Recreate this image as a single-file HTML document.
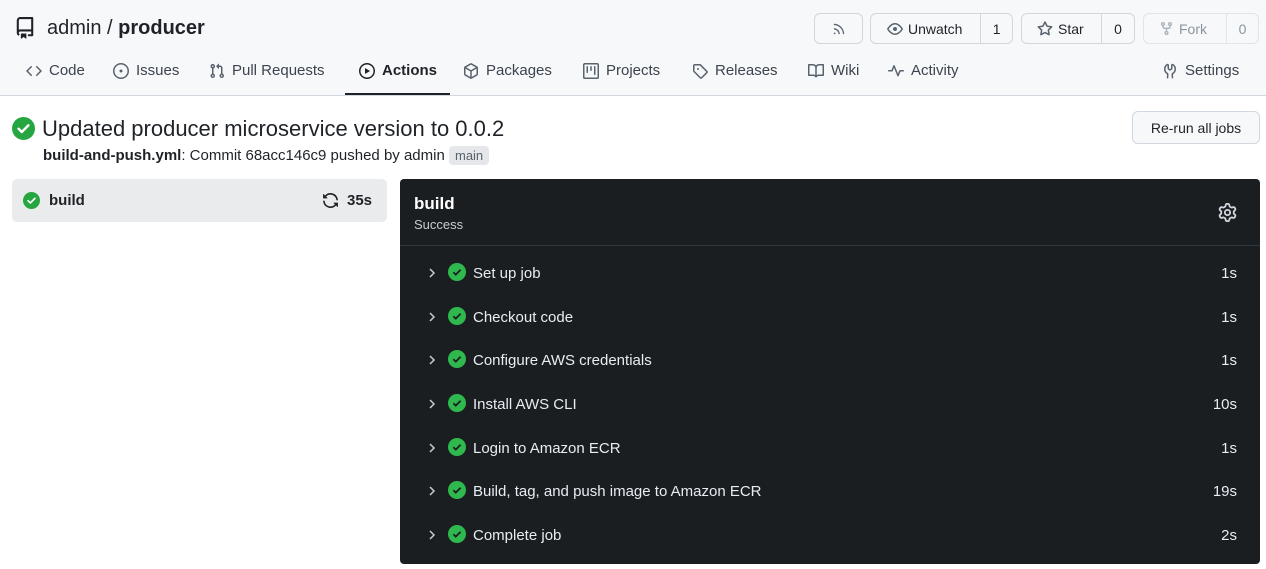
<!DOCTYPE html>
<html><head><meta charset="utf-8"><style>
*{box-sizing:border-box;margin:0;padding:0}
body{width:1266px;height:569px;background:#fff;font-family:"Liberation Sans",Helvetica,Arial,sans-serif;color:#1f2328;position:relative;overflow:hidden}
.a{position:absolute}
.hdr{left:0;top:0;width:1266px;height:96px;background:#f6f8fa;border-bottom:1px solid #d0d7de}
.nav{font-size:15px;color:#3d444d;top:62px;white-space:nowrap}
.nav svg{position:absolute;left:-23px;top:1px}
.btn{border:1px solid #d0d7de;border-radius:6px;background:#f6f8fa;height:31px;top:13px;font-size:14px;display:flex;align-items:center}
.btn .c{border-left:1px solid #d0d7de;height:100%;display:flex;align-items:center;justify-content:center}
.row{left:400px;width:860px;height:44px;color:#e6edf3;font-size:15px}
.row .ch{position:absolute;left:27px;top:14px}
.row .ic{position:absolute;left:48px;top:12px}
.row .t{position:absolute;left:73px;top:14px}
.row .d{position:absolute;right:23px;top:14px}
</style></head><body>
<div class="a hdr"></div>
<svg class="a" style="left:14px;top:15px" width="22" height="26" viewBox="0 0 16 16"><path fill="#1f2328" d="M2 2.5A2.5 2.5 0 0 1 4.5 0h8.75a.75.75 0 0 1 .75.75v12.5a.75.75 0 0 1-.75.75h-2.5a.75.75 0 0 1 0-1.5h1.75v-2h-8a1 1 0 0 0-.714 1.7.75.75 0 1 1-1.072 1.05A2.495 2.495 0 0 1 2 11.5Zm10.5-1h-8a1 1 0 0 0-1 1v6.708A2.486 2.486 0 0 1 4.5 9h8ZM5 12.25a.25.25 0 0 1 .25-.25h3.5a.25.25 0 0 1 .25.25v3.25a.25.25 0 0 1-.4.2l-1.45-1.087a.249.249 0 0 0-.3 0L5.4 15.7a.25.25 0 0 1-.4-.2Z"/></svg>
<div class="a" style="left:47px;top:17px;font-size:20px">admin <span style="font-weight:300">/</span> <b>producer</b></div>

<div class="a btn" style="left:814px;width:49px;justify-content:center"><svg width="14" height="14" viewBox="0 0 16 16"><path fill="#59636e" d="M2.002 2.725a.75.75 0 0 1 .797-.699C8.79 2.420 13.58 7.21 13.974 13.201a.75.75 0 0 1-1.497.098 10.502 10.502 0 0 0-9.776-9.776.747.747 0 0 1-.7-.798ZM2.840 7.05h-.002a7.002 7.002 0 0 1 6.113 6.111.75.75 0 0 1-1.490.178 5.503 5.503 0 0 0-4.800-4.800.75.75 0 0 1 .179-1.489ZM2 13a1 1 0 1 1 2 0 1 1 0 0 1-2 0Z"/></svg></div>
<div class="a btn" style="left:870px;width:143px"><span style="width:110px;padding-left:16px;display:flex;align-items:center;gap:5px"><svg width="16" height="16" viewBox="0 0 16 16"><path fill="#59636e" d="M8 2c1.981 0 3.671.992 4.933 2.078 1.270 1.091 2.187 2.345 2.637 3.023a1.620 1.620 0 0 1 0 1.798c-.450.678-1.367 1.932-2.637 3.023C11.670 13.008 9.981 14 8 14c-1.981 0-3.671-.992-4.933-2.078C1.797 10.830.880 9.576.430 8.898a1.620 1.620 0 0 1 0-1.798c.450-.677 1.367-1.931 2.637-3.022C4.330 2.992 6.019 2 8 2ZM1.679 7.932a.12.12 0 0 0 0 .136c.411.622 1.241 1.750 2.366 2.717C5.176 11.758 6.527 12.500 8 12.500c1.473 0 2.825-.742 3.955-1.715 1.124-.967 1.954-2.096 2.366-2.717a.12.12 0 0 0 0-.136c-.412-.621-1.242-1.750-2.366-2.717C10.824 4.242 9.473 3.500 8 3.500c-1.473 0-2.825.742-3.955 1.715-1.124.967-1.954 2.096-2.366 2.717ZM8 10a2 2 0 1 1-.001-3.999A2 2 0 0 1 8 10Z"/></svg>Unwatch</span><span class="c" style="width:32px">1</span></div>
<div class="a btn" style="left:1021px;width:114px"><span style="width:79px;padding-left:15px;display:flex;align-items:center;gap:5px"><svg width="16" height="16" viewBox="0 0 16 16"><path fill="#59636e" d="M8 .25a.75.75 0 0 1 .673.418l1.882 3.815 4.210.612a.75.75 0 0 1 .416 1.279l-3.046 2.970.719 4.192a.751.751 0 0 1-1.088.791L8 12.347l-3.766 1.980a.75.75 0 0 1-1.088-.790l.720-4.194L.818 6.374a.75.75 0 0 1 .416-1.280l4.210-.611L7.327.668A.75.75 0 0 1 8 .25Zm0 2.445L6.615 5.500a.75.75 0 0 1-.564.410l-3.097.450 2.240 2.184a.75.75 0 0 1 .216.664l-.528 3.084 2.769-1.456a.75.75 0 0 1 .698 0l2.770 1.456-.530-3.084a.75.75 0 0 1 .216-.664l2.240-2.183-3.096-.450a.75.75 0 0 1-.564-.410L8 2.694Z"/></svg>Star</span><span class="c" style="width:33px">0</span></div>
<div class="a btn" style="left:1143px;width:116px;color:#8c959f;border-color:#e1e4e8"><span style="width:82px;padding-left:15px;display:flex;align-items:center;gap:5px"><svg width="15" height="15" viewBox="0 0 16 16"><path fill="#aab2bb" d="M5 5.372v.878c0 .414.336.75.75.75h4.5a.75.75 0 0 0 .75-.75v-.878a2.25 2.25 0 1 1 1.5 0v.878a2.25 2.25 0 0 1-2.25 2.25h-1.5v2.128a2.251 2.251 0 1 1-1.5 0V8.5h-1.5A2.25 2.25 0 0 1 3.5 6.25v-.878a2.25 2.25 0 1 1 1.5 0ZM5 3.25a.75.75 0 1 0-1.5 0 .75.75 0 0 0 1.5 0Zm6.75.75a.75.75 0 1 0 0-1.5.75.75 0 0 0 0 1.5Zm-3 8.75a.75.75 0 1 0-1.5 0 .75.75 0 0 0 1.5 0Z"/></svg>Fork</span><span class="c" style="width:32px;border-color:#e1e4e8">0</span></div>

<div class="a nav" style="left:49px"><svg width="16" height="16" viewBox="0 0 16 16"><path fill="#59636e" d="m11.28 3.22 4.25 4.25a.75.75 0 0 1 0 1.06l-4.25 4.25a.749.749 0 0 1-1.275-.326.749.749 0 0 1 .215-.734L13.94 8l-3.72-3.72a.749.749 0 0 1 .326-1.275.749.749 0 0 1 .734.215Zm-6.56 0a.751.751 0 0 1 1.042.018.751.751 0 0 1 .018 1.042L2.06 8l3.72 3.72a.749.749 0 0 1-.326 1.275.749.749 0 0 1-.734-.215L.47 8.53a.75.75 0 0 1 0-1.06Z"/></svg>Code</div>
<div class="a nav" style="left:136px"><svg width="16" height="16" viewBox="0 0 16 16"><path fill="#59636e" d="M8 9.5a1.5 1.5 0 1 0 0-3 1.5 1.5 0 0 0 0 3Z"/><path fill="#59636e" d="M8 0a8 8 0 1 1 0 16A8 8 0 0 1 8 0ZM1.5 8a6.5 6.5 0 1 0 13 0 6.5 6.5 0 0 0-13 0Z"/></svg>Issues</div>
<div class="a nav" style="left:232px"><svg width="16" height="16" viewBox="0 0 16 16"><path fill="#59636e" d="M1.5 3.25a2.25 2.25 0 1 1 3 2.122v5.256a2.251 2.251 0 1 1-1.5 0V5.372A2.25 2.25 0 0 1 1.5 3.25Zm5.677-.177L9.573.677A.25.25 0 0 1 10 .854V2.5h1A2.5 2.5 0 0 1 13.5 5v5.628a2.251 2.251 0 1 1-1.5 0V5a1 1 0 0 0-1-1h-1v1.646a.25.25 0 0 1-.427.177L7.177 3.427a.25.25 0 0 1 0-.354ZM3.75 2.5a.75.75 0 1 0 0 1.5.75.75 0 0 0 0-1.5Zm0 9.5a.75.75 0 1 0 0 1.5.75.75 0 0 0 0-1.5Zm8.25.75a.75.75 0 1 0 1.5 0 .75.75 0 0 0-1.5 0Z"/></svg>Pull Requests</div>
<div class="a nav" style="left:382px;color:#1f2328;font-weight:bold"><svg width="16" height="16" viewBox="0 0 16 16"><path fill="#1f2328" d="M8 0a8 8 0 1 1 0 16A8 8 0 0 1 8 0ZM1.5 8a6.5 6.5 0 1 0 13 0 6.5 6.5 0 0 0-13 0Zm4.879-2.773 4.264 2.559a.25.25 0 0 1 0 .428l-4.264 2.559A.25.25 0 0 1 6 10.559V5.442a.25.25 0 0 1 .379-.215Z"/></svg>Actions</div>
<div class="a" style="left:345px;top:93px;width:105px;height:2px;background:#1f2328"></div>
<div class="a nav" style="left:486px"><svg width="16" height="16" viewBox="0 0 16 16"><path fill="#59636e" d="m8.878.392 5.25 3.045c.54.314.872.89.872 1.514v6.098a1.75 1.75 0 0 1-.872 1.514l-5.25 3.045a1.75 1.75 0 0 1-1.756 0l-5.25-3.045A1.75 1.75 0 0 1 1 11.049V4.951c0-.624.332-1.201.872-1.514L7.122.392a1.75 1.75 0 0 1 1.756 0ZM7.875 1.69l-4.63 2.685L8 7.133l4.755-2.758-4.63-2.685a.248.248 0 0 0-.25 0ZM2.5 5.677v5.372c0 .09.047.171.125.216l4.625 2.683V8.432Zm6.25 8.271 4.625-2.683a.25.25 0 0 0 .125-.216V5.677L8.75 8.432Z"/></svg>Packages</div>
<div class="a nav" style="left:606px"><svg width="16" height="16" viewBox="0 0 16 16"><path fill="#59636e" d="M1.75 0h12.5C15.216 0 16 .784 16 1.75v12.5A1.75 1.75 0 0 1 14.25 16H1.75A1.75 1.75 0 0 1 0 14.25V1.75C0 .784.784 0 1.75 0ZM1.5 1.75v12.5c0 .138.112.25.25.25h12.5a.25.25 0 0 0 .25-.25V1.75a.25.25 0 0 0-.25-.25H1.75a.25.25 0 0 0-.25.25ZM11.75 3a.75.75 0 0 1 .75.75v7.5a.75.75 0 0 1-1.5 0v-7.5a.75.75 0 0 1 .75-.75Zm-8.25.75a.75.75 0 0 1 1.5 0v5.5a.75.75 0 0 1-1.5 0ZM8 3a.75.75 0 0 1 .75.75v3.5a.75.75 0 0 1-1.5 0v-3.5A.75.75 0 0 1 8 3Z"/></svg>Projects</div>
<div class="a nav" style="left:715px"><svg width="16" height="16" viewBox="0 0 16 16"><path fill="#59636e" d="M1 7.775V2.75C1 1.784 1.784 1 2.75 1h5.025c.464 0 .91.184 1.238.513l6.25 6.25a1.75 1.75 0 0 1 0 2.474l-5.026 5.026a1.75 1.75 0 0 1-2.474 0l-6.25-6.25A1.752 1.752 0 0 1 1 7.775Zm1.5 0c0 .066.026.13.073.177l6.25 6.25a.25.25 0 0 0 .354 0l5.025-5.025a.25.25 0 0 0 0-.354l-6.25-6.25a.25.25 0 0 0-.177-.073H2.75a.25.25 0 0 0-.25.25ZM6 5a1 1 0 1 1 0 2 1 1 0 0 1 0-2Z"/></svg>Releases</div>
<div class="a nav" style="left:831px"><svg width="16" height="16" viewBox="0 0 16 16"><path fill="#59636e" d="M0 1.75A.75.75 0 0 1 .75 1h4.253c1.227 0 2.317.59 3 1.501A3.743 3.743 0 0 1 11.006 1h4.245a.75.75 0 0 1 .75.75v10.5a.75.75 0 0 1-.75.75h-4.507a2.25 2.25 0 0 0-1.591.659l-.622.621a.75.75 0 0 1-1.06 0l-.622-.621A2.25 2.25 0 0 0 5.258 13H.75a.75.75 0 0 1-.75-.75Zm7.251 10.324.004-5.073-.002-2.253A2.25 2.25 0 0 0 5.003 2.5H1.5v9h3.757a3.75 3.75 0 0 1 1.994.574ZM8.755 4.75l-.004 7.322a3.752 3.752 0 0 1 1.992-.572H14.5v-9h-3.495a2.25 2.25 0 0 0-2.25 2.25Z"/></svg>Wiki</div>
<div class="a nav" style="left:911px"><svg width="16" height="16" viewBox="0 0 16 16"><path fill="#59636e" d="M6 2c.306 0 .582.187.696.471L10 10.731l1.304-3.26A.751.751 0 0 1 12 7h3.25a.75.75 0 0 1 0 1.5h-2.742l-1.812 4.528a.751.751 0 0 1-1.392 0L6 4.77 4.696 8.03A.75.75 0 0 1 4 8.5H.75a.75.75 0 0 1 0-1.5h2.742l1.812-4.529A.751.751 0 0 1 6 2Z"/></svg>Activity</div>
<div class="a nav" style="left:1185px"><svg width="16" height="16" viewBox="0 0 16 16"><path fill="#59636e" d="M5.433 2.304A4.492 4.492 0 0 0 3.5 6c0 1.598.832 3.002 2.09 3.802.518.328.929.923.902 1.64v.008l-.164 3.337a.75.75 0 1 1-1.498-.073l.163-3.33c.002-.085-.05-.216-.207-.316A5.996 5.996 0 0 1 2 6a5.993 5.993 0 0 1 2.567-4.92 1.482 1.482 0 0 1 1.673-.04c.462.296.76.827.76 1.423v2.82c0 .082.041.16.11.206l.75.51a.25.25 0 0 0 .28 0l.75-.51A.249.249 0 0 0 9 5.282V2.463c0-.596.298-1.127.76-1.423a1.482 1.482 0 0 1 1.673.04A5.993 5.993 0 0 1 14 6a5.996 5.996 0 0 1-2.786 5.068c-.157.1-.209.23-.207.315l.163 3.33a.752.752 0 0 1-1.094.714.75.75 0 0 1-.404-.64l-.164-3.345c-.027-.717.384-1.312.902-1.64A4.495 4.495 0 0 0 12.5 6a4.492 4.492 0 0 0-1.933-3.696c-.024.017-.067.067-.067.16v2.818a1.75 1.75 0 0 1-.767 1.448l-.75.51a1.75 1.750 0 0 1-1.966 0l-.75-.51A1.75 1.75 0 0 1 5.5 5.282V2.463c0-.092-.043-.142-.067-.159Z"/></svg>Settings</div>

<svg class="a" style="left:12px;top:117px" width="23" height="23" viewBox="0 0 16 16"><circle cx="8" cy="8" r="8" fill="#26a641"/><path d="M4.6 8.2l2.2 2.2 4.6-4.6" stroke="#fff" stroke-width="1.7" fill="none" stroke-linecap="round" stroke-linejoin="round"/></svg>
<div class="a" style="left:42px;top:116px;font-size:22px">Updated producer microservice version to 0.0.2</div>
<div class="a" style="left:43px;top:147px;font-size:15px"><b>build-and-push.yml</b>: Commit 68acc146c9 pushed by admin <span style="background:#e5e7ea;border-radius:4px;padding:2px 6px;font-size:13px;color:#59636e">main</span></div>
<div class="a" style="left:1132px;top:111px;width:128px;height:33px;border:1px solid #d0d7de;border-radius:6px;background:#f6f8fa;font-size:14px;display:flex;align-items:center;justify-content:center">Re-run all jobs</div>

<div class="a" style="left:12px;top:179px;width:375px;height:43px;background:#eaebed;border-radius:5px"></div>
<svg class="a" style="left:23px;top:192px" width="17" height="17" viewBox="0 0 16 16"><circle cx="8" cy="8" r="8" fill="#26a641"/><path d="M4.8 8.2l2.1 2.1 4.3-4.3" stroke="#fff" stroke-width="1.6" fill="none" stroke-linecap="round" stroke-linejoin="round"/></svg>
<div class="a" style="left:49px;top:192px;font-size:15px;font-weight:bold">build</div>
<svg class="a" style="left:322px;top:192px" width="17" height="17" viewBox="0 0 16 16"><path fill="#1f2328" d="M1.705 8.005a.75.75 0 0 1 .834.656 5.5 5.5 0 0 0 9.592 2.97l-1.204-1.204a.25.25 0 0 1 .177-.427h3.646a.25.25 0 0 1 .25.25v3.646a.25.25 0 0 1-.427.177l-1.38-1.38A7.002 7.002 0 0 1 1.05 8.84a.75.75 0 0 1 .656-.834ZM8 2.5a5.487 5.487 0 0 0-4.131 1.869l1.204 1.204A.25.25 0 0 1 4.896 6H1.25A.25.25 0 0 1 1 5.75V2.104a.25.25 0 0 1 .427-.177l1.38 1.38A7.002 7.002 0 0 1 14.95 7.16a.75.75 0 0 1-1.49.178A5.5 5.5 0 0 0 8 2.5Z"/></svg>
<div class="a" style="left:347px;top:192px;font-size:15px;font-weight:bold">35s</div>

<div class="a" style="left:400px;top:179px;width:860px;height:385px;background:#1b1e21;border-radius:4px"></div>
<div class="a" style="left:414px;top:194px;font-size:17px;font-weight:bold;color:#fff">build</div>
<div class="a" style="left:414px;top:217px;font-size:13px;color:#c5ccd3">Success</div>
<svg class="a" style="left:1218px;top:203px" width="19" height="19" viewBox="0 0 16 16"><path fill="#d0d7de" d="M8 0a8.2 8.2 0 0 1 .701.031C9.444.095 9.99.645 10.16 1.29l.288 1.107c.018.066.079.158.212.224.231.114.454.243.668.386.123.082.233.09.299.071l1.103-.303c.644-.176 1.392.021 1.82.63.27.385.506.792.704 1.218.315.675.111 1.422-.364 1.891l-.814.806c-.049.048-.098.147-.088.294.016.257.016.515 0 .772-.01.147.038.246.088.294l.814.806c.475.469.679 1.216.364 1.891a7.977 7.977 0 0 1-.704 1.217c-.428.61-1.176.807-1.82.63l-1.102-.302c-.067-.019-.177-.011-.3.071a5.909 5.909 0 0 1-.668.386c-.133.066-.194.158-.211.224l-.29 1.106c-.168.646-.715 1.196-1.458 1.26a8.006 8.006 0 0 1-1.402 0c-.743-.064-1.289-.614-1.458-1.26l-.289-1.106c-.018-.066-.079-.158-.212-.224a5.738 5.738 0 0 1-.668-.386c-.123-.082-.233-.09-.299-.071l-1.103.303c-.644.176-1.392-.021-1.82-.63a8.12 8.12 0 0 1-.704-1.218c-.315-.675-.111-1.422.363-1.891l.815-.806c.05-.048.098-.147.088-.294a6.214 6.214 0 0 1 0-.772c.01-.147-.038-.246-.088-.294l-.815-.806C.635 6.045.431 5.298.746 4.623a7.92 7.92 0 0 1 .704-1.217c.428-.61 1.176-.807 1.82-.63l1.102.302c.067.019.177.011.3-.071.214-.143.437-.272.668-.386.133-.066.194-.158.211-.224l.29-1.106C6.009.645 6.556.095 7.299.03 7.53.01 7.764 0 8 0Zm-.571 1.525c-.036.003-.108.036-.137.146l-.289 1.105c-.147.561-.549.967-.998 1.189-.173.086-.34.183-.5.29-.417.278-.97.423-1.529.27l-1.103-.303c-.109-.03-.175.016-.195.045-.22.312-.412.644-.573.99-.014.031-.021.11.059.19l.815.806c.411.406.562.957.53 1.456a4.709 4.709 0 0 0 0 .582c.032.499-.119 1.05-.53 1.456l-.815.806c-.081.08-.073.159-.059.19.162.346.353.677.573.989.02.03.085.076.195.046l1.102-.303c.56-.153 1.113-.008 1.53.27.161.107.328.204.501.29.447.222.85.629.997 1.189l.289 1.105c.029.109.101.143.137.146a6.6 6.6 0 0 0 1.142 0c.036-.003.108-.036.137-.146l.289-1.105c.147-.561.549-.967.998-1.189.173-.086.34-.183.5-.29.417-.278.97-.423 1.529-.27l1.103.303c.109.029.175-.016.195-.045.22-.313.411-.644.573-.99.014-.031.021-.11-.059-.19l-.815-.806c-.411-.406-.562-.957-.53-1.456a4.709 4.709 0 0 0 0-.582c-.032-.499.119-1.05.53-1.456l.815-.806c.081-.08.073-.159.059-.19a6.464 6.464 0 0 0-.573-.989c-.02-.03-.085-.076-.195-.046l-1.102.303c-.56.153-1.113.008-1.53-.27a4.44 4.44 0 0 0-.501-.29c-.447-.222-.85-.629-.997-1.189l-.289-1.105c-.029-.11-.101-.143-.137-.146a6.6 6.6 0 0 0-1.142 0ZM11 8a3 3 0 1 1-6 0 3 3 0 0 1 6 0ZM9.5 8a1.5 1.5 0 1 0-3.001.001A1.5 1.5 0 0 0 9.5 8Z"/></svg>
<div class="a" style="left:400px;top:245px;width:860px;height:1px;background:#30363d"></div>

<div class="a row" style="top:251px"><svg class="ch" width="10" height="16" viewBox="0 0 10 16"><path d="M3 4l4 4-4 4" stroke="#c5ccd3" stroke-width="1.5" fill="none"/></svg><svg class="ic" width="18" height="18" viewBox="0 0 16 16"><circle cx="8" cy="8" r="8" fill="#2fb84d"/><path d="M4.8 8.2l2.1 2.1 4.3-4.3" stroke="#1b1e21" stroke-width="1.6" fill="none"/></svg><span class="t">Set up job</span><span class="d">1s</span></div>
<div class="a row" style="top:295px"><svg class="ch" width="10" height="16" viewBox="0 0 10 16"><path d="M3 4l4 4-4 4" stroke="#c5ccd3" stroke-width="1.5" fill="none"/></svg><svg class="ic" width="18" height="18" viewBox="0 0 16 16"><circle cx="8" cy="8" r="8" fill="#2fb84d"/><path d="M4.8 8.2l2.1 2.1 4.3-4.3" stroke="#1b1e21" stroke-width="1.6" fill="none"/></svg><span class="t">Checkout code</span><span class="d">1s</span></div>
<div class="a row" style="top:338px"><svg class="ch" width="10" height="16" viewBox="0 0 10 16"><path d="M3 4l4 4-4 4" stroke="#c5ccd3" stroke-width="1.5" fill="none"/></svg><svg class="ic" width="18" height="18" viewBox="0 0 16 16"><circle cx="8" cy="8" r="8" fill="#2fb84d"/><path d="M4.8 8.2l2.1 2.1 4.3-4.3" stroke="#1b1e21" stroke-width="1.6" fill="none"/></svg><span class="t">Configure AWS credentials</span><span class="d">1s</span></div>
<div class="a row" style="top:382px"><svg class="ch" width="10" height="16" viewBox="0 0 10 16"><path d="M3 4l4 4-4 4" stroke="#c5ccd3" stroke-width="1.5" fill="none"/></svg><svg class="ic" width="18" height="18" viewBox="0 0 16 16"><circle cx="8" cy="8" r="8" fill="#2fb84d"/><path d="M4.8 8.2l2.1 2.1 4.3-4.3" stroke="#1b1e21" stroke-width="1.6" fill="none"/></svg><span class="t">Install AWS CLI</span><span class="d">10s</span></div>
<div class="a row" style="top:426px"><svg class="ch" width="10" height="16" viewBox="0 0 10 16"><path d="M3 4l4 4-4 4" stroke="#c5ccd3" stroke-width="1.5" fill="none"/></svg><svg class="ic" width="18" height="18" viewBox="0 0 16 16"><circle cx="8" cy="8" r="8" fill="#2fb84d"/><path d="M4.8 8.2l2.1 2.1 4.3-4.3" stroke="#1b1e21" stroke-width="1.6" fill="none"/></svg><span class="t">Login to Amazon ECR</span><span class="d">1s</span></div>
<div class="a row" style="top:469px"><svg class="ch" width="10" height="16" viewBox="0 0 10 16"><path d="M3 4l4 4-4 4" stroke="#c5ccd3" stroke-width="1.5" fill="none"/></svg><svg class="ic" width="18" height="18" viewBox="0 0 16 16"><circle cx="8" cy="8" r="8" fill="#2fb84d"/><path d="M4.8 8.2l2.1 2.1 4.3-4.3" stroke="#1b1e21" stroke-width="1.6" fill="none"/></svg><span class="t">Build, tag, and push image to Amazon ECR</span><span class="d">19s</span></div>
<div class="a row" style="top:513px"><svg class="ch" width="10" height="16" viewBox="0 0 10 16"><path d="M3 4l4 4-4 4" stroke="#c5ccd3" stroke-width="1.5" fill="none"/></svg><svg class="ic" width="18" height="18" viewBox="0 0 16 16"><circle cx="8" cy="8" r="8" fill="#2fb84d"/><path d="M4.8 8.2l2.1 2.1 4.3-4.3" stroke="#1b1e21" stroke-width="1.6" fill="none"/></svg><span class="t">Complete job</span><span class="d">2s</span></div>
</body></html>
